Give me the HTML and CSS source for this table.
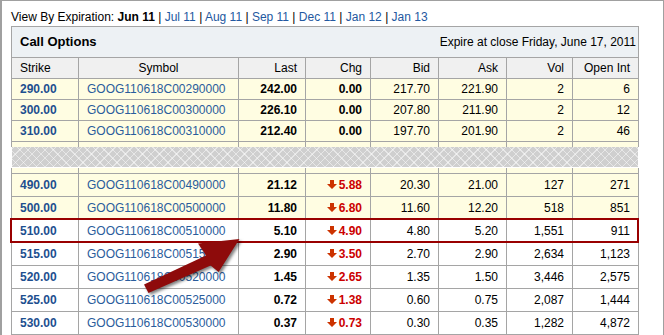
FILE: index.html
```html
<!DOCTYPE html>
<html>
<head>
<meta charset="utf-8">
<link rel="stylesheet" href="styles.css">
</head>
<body>
<div class="frame">
  <div class="expiry">View By Expiration: <b>Jun 11</b> | <a href="#">Jul 11</a> | <a href="#">Aug 11</a> | <a href="#">Sep 11</a> | <a href="#">Dec 11</a> | <a href="#">Jan 12</a> | <a href="#">Jan 13</a></div>
  <div class="chain">
    <div class="chain-title"><span class="name">Call Options</span><span>Expire at close Friday, June 17, 2011</span></div>
    <div class="row head"><span class="l">Strike</span><span class="c">Symbol</span><span>Last</span><span>Chg</span><span>Bid</span><span>Ask</span><span>Vol</span><span>Open Int</span></div>
    <div class="row hl"><span class="strike">290.00</span><span class="sym">GOOG110618C00290000</span><span class="last">242.00</span><span class="chg">0.00</span><span>217.70</span><span>221.90</span><span>2</span><span>6</span></div>
    <div class="row hl"><span class="strike">300.00</span><span class="sym">GOOG110618C00300000</span><span class="last">226.10</span><span class="chg">0.00</span><span>207.80</span><span>211.90</span><span>2</span><span>12</span></div>
    <div class="row hl"><span class="strike">310.00</span><span class="sym">GOOG110618C00310000</span><span class="last">212.40</span><span class="chg">0.00</span><span>197.70</span><span>201.90</span><span>2</span><span>46</span></div>
    <div class="row hl stub-top"><span></span><span></span><span></span><span></span><span></span><span></span><span></span><span></span></div>
    <div class="band"></div>
    <div class="row hl stub-bottom"><span></span><span></span><span></span><span></span><span></span><span></span><span></span><span></span></div>
    <div class="row tall hl"><span class="strike">490.00</span><span class="sym">GOOG110618C00490000</span><span class="last">21.12</span><span class="chg down"><svg class="dn" viewBox="0 0 10 9" width="10" height="9"><path d="M3 0H7V4H10L5 9L0 4H3Z"/></svg>5.88</span><span>20.30</span><span>21.00</span><span>127</span><span>271</span></div>
    <div class="row tall hl"><span class="strike">500.00</span><span class="sym">GOOG110618C00500000</span><span class="last">11.80</span><span class="chg down"><svg class="dn" viewBox="0 0 10 9" width="10" height="9"><path d="M3 0H7V4H10L5 9L0 4H3Z"/></svg>6.80</span><span>11.60</span><span>12.20</span><span>518</span><span>851</span></div>
    <div class="row tall picked"><span class="strike">510.00</span><span class="sym">GOOG110618C00510000</span><span class="last">5.10</span><span class="chg down"><svg class="dn" viewBox="0 0 10 9" width="10" height="9"><path d="M3 0H7V4H10L5 9L0 4H3Z"/></svg>4.90</span><span>4.80</span><span>5.20</span><span>1,551</span><span>911</span></div>
    <div class="row tall"><span class="strike">515.00</span><span class="sym">GOOG110618C00515000</span><span class="last">2.90</span><span class="chg down"><svg class="dn" viewBox="0 0 10 9" width="10" height="9"><path d="M3 0H7V4H10L5 9L0 4H3Z"/></svg>3.50</span><span>2.70</span><span>2.90</span><span>2,634</span><span>1,123</span></div>
    <div class="row tall"><span class="strike">520.00</span><span class="sym">GOOG110618C00520000</span><span class="last">1.45</span><span class="chg down"><svg class="dn" viewBox="0 0 10 9" width="10" height="9"><path d="M3 0H7V4H10L5 9L0 4H3Z"/></svg>2.65</span><span>1.35</span><span>1.50</span><span>3,446</span><span>2,575</span></div>
    <div class="row tall"><span class="strike">525.00</span><span class="sym">GOOG110618C00525000</span><span class="last">0.72</span><span class="chg down"><svg class="dn" viewBox="0 0 10 9" width="10" height="9"><path d="M3 0H7V4H10L5 9L0 4H3Z"/></svg>1.38</span><span>0.60</span><span>0.75</span><span>2,087</span><span>1,444</span></div>
    <div class="row tall"><span class="strike">530.00</span><span class="sym">GOOG110618C00530000</span><span class="last">0.37</span><span class="chg down"><svg class="dn" viewBox="0 0 10 9" width="10" height="9"><path d="M3 0H7V4H10L5 9L0 4H3Z"/></svg>0.73</span><span>0.30</span><span>0.35</span><span>1,282</span><span>4,872</span></div>
  </div>
</div>
<svg class="pointer" width="664" height="335" viewBox="0 0 664 335"><polygon points="144,284.5 206,255.6 198,243.5 239.5,239 218.6,272 210.6,265.6 148.5,293"/></svg>
</body>
</html>
```

FILE: styles.css
```css
* { box-sizing: border-box; }

body {
  margin: 0;
  font-family: "Liberation Sans", Arial, sans-serif;
  font-size: 12px;
  color: #000;
  background: #fff;
}

.frame {
  width: 664px;
  height: 335px;
  border: 1px solid #a0a0a0;
  border-left-width: 2px;
  border-bottom: 0;
  padding: 9px 0 0 9px;
  overflow: hidden;
}

.expiry {
  line-height: 14px;
  white-space: nowrap;
}

.expiry a {
  color: #2358a0;
  text-decoration: none;
}

.chain {
  width: 628px;
  margin-top: 2px;
}

.chain-title {
  display: flex;
  justify-content: space-between;
  height: 32px;
  border: 1px solid #a5a5a5;
  background: #edf1f4;
  line-height: 30px;
  padding: 0 2px 0 8px;
}

.chain-title .name {
  font-size: 13px;
  font-weight: bold;
}

.row {
  display: grid;
  grid-template-columns: 67px 160px 67px 65px 68px 68px 66px 66px;
  border-left: 1px solid #a5a5a5;
  border-bottom: 1px solid #a5a5a5;
  height: 21px;
  line-height: 20px;
  position: relative;
}

.row > span {
  border-right: 1px solid #a5a5a5;
  padding: 0 8px;
  text-align: right;
  white-space: nowrap;
  overflow: hidden;
}

.row > .l { text-align: left; }
.row > .c { text-align: center; }

.head { background: #f0f0f0; }

.row > .strike {
  text-align: left;
  font-weight: bold;
  color: #1d4f8f;
}

.row > .sym {
  text-align: left;
  color: #2a5c9c;
}

.row > .last,
.row > .chg { font-weight: bold; }

.row > .down { color: #cc0000; }

.dn {
  fill: #cc3300;
  margin-right: 2px;
  vertical-align: baseline;
}

.hl { background: #fffde2; }

.tall {
  height: 23px;
  line-height: 22px;
}

.stub-top {
  height: 5px;
  border-bottom: 0;
}

.stub-bottom { height: 6px; }

.band {
  width: 626px;
  height: 20px;
  margin: 0 0 1px 1px;
  background-color: #cfcfcf;
  background-image:
    repeating-linear-gradient(45deg, transparent 0 5px, rgba(255,255,255,0.5) 5px 6px),
    repeating-linear-gradient(-45deg, transparent 0 5px, rgba(255,255,255,0.5) 5px 6px);
}

.picked::after {
  content: "";
  position: absolute;
  left: -2px;
  right: 0;
  top: -2px;
  bottom: -1px;
  border: 2px solid #990000;
}

.pointer {
  position: absolute;
  left: 0;
  top: 0;
  pointer-events: none;
  filter: drop-shadow(2px 2px 1.5px rgba(0,0,0,0.5));
}

.pointer polygon { fill: #8e0b0b; }
```
